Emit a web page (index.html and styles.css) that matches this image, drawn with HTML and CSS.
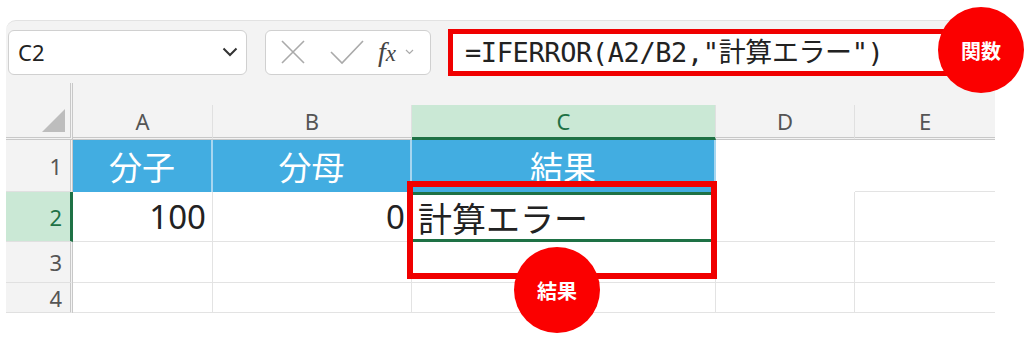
FILE: index.html
```html
<!DOCTYPE html>
<html lang="ja">
<head>
    <meta charset="UTF-8">
    <title>IFERROR 計算エラー</title>
    <link rel="stylesheet" href="styles.css">
</head>
<body>
    <div class="sheet">
        <div class="toolbar">
            <div class="namebox">
                <span>C2</span>
                <svg width="16" height="10" viewBox="0 0 16 10"><path d="M1.5 1.5 L8 8 L14.5 1.5" fill="none" stroke="#333" stroke-width="2"/></svg>
            </div>
            <div class="fxbox">
                <svg width="26" height="26" viewBox="0 0 26 26"><path d="M2 2 L24 24 M24 2 L2 24" stroke="#aaa" stroke-width="1.6" fill="none"/></svg>
                <svg width="34" height="26" viewBox="0 0 34 26"><path d="M1 13 L12 24 L33 2" stroke="#aaa" stroke-width="1.6" fill="none"/></svg>
                <span class="fx"><i>f</i><i class="x">x</i></span>
                <svg width="9" height="6" viewBox="0 0 9 6"><path d="M1 1 L4.5 4.5 L8 1" stroke="#aaa" stroke-width="1.2" fill="none"/></svg>
            </div>
            <div class="formula">=IFERROR(A2/B2,"計算エラー")</div>
        </div>

        <div class="grid">
            <div class="rh spacer"></div>
            <div class="spacer span5"></div>

            <div class="corner"><span class="tri"></span></div>
            <div class="ch">A</div>
            <div class="ch">B</div>
            <div class="ch sel">C</div>
            <div class="ch">D</div>
            <div class="ch last">E</div>

            <div class="rh">1</div>
            <div class="cell head">分子</div>
            <div class="cell head">分母</div>
            <div class="cell head">結果</div>
            <div class="cell open"></div>
            <div class="cell last"></div>

            <div class="rh sel">2</div>
            <div class="cell num">100</div>
            <div class="cell num">0</div>
            <div class="cell text active">計算エラー</div>
            <div class="cell"></div>
            <div class="cell last"></div>

            <div class="rh">3</div>
            <div class="cell"></div>
            <div class="cell"></div>
            <div class="cell"></div>
            <div class="cell"></div>
            <div class="cell last"></div>

            <div class="rh">4</div>
            <div class="cell"></div>
            <div class="cell"></div>
            <div class="cell"></div>
            <div class="cell"></div>
            <div class="cell last"></div>
        </div>
    </div>

    <div class="mark result-box"></div>
    <div class="badge badge-func">関数</div>
    <div class="badge badge-result">結果</div>
</body>
</html>
```

FILE: styles.css
```css
body {
    margin: 0;
    background-color: #ffffff;
    font-family: "Noto Sans", "Noto Sans CJK JP", sans-serif;
    position: relative;
    height: 338px;
    overflow: hidden;
}
.sheet {
    margin: 20px 0 0 6px;
    width: 989px;
    background-color: #f3f3f3;
    border-top-left-radius: 10px;
    border-top: 1px solid #e2e2e2;
}
.toolbar {
    display: flex;
    align-items: center;
    height: 62px;
    padding-left: 2px;
}
.namebox {
    box-sizing: border-box;
    width: 239px;
    height: 45px;
    background-color: #ffffff;
    border: 1px solid #d0d0d0;
    border-radius: 6px;
    display: flex;
    align-items: center;
    justify-content: space-between;
    padding: 0 8px 0 9px;
    font-size: 22px;
    color: #222;
}
.fxbox {
    box-sizing: border-box;
    width: 166px;
    height: 45px;
    margin-left: 18px;
    background-color: #ffffff;
    border: 1px solid #d0d0d0;
    border-radius: 6px;
    display: flex;
    align-items: center;
    padding-left: 14px;
}
.fxbox svg:nth-child(2) {
    margin-left: 24px;
}
.fx {
    font-family: "Liberation Serif", serif;
    font-size: 28px;
    color: #444;
    margin-left: 14px;
    margin-right: 9px;
    line-height: 1;
}
.fx .x {
    font-size: 23px;
}
.formula {
    box-sizing: border-box;
    width: 502px;
    height: 47px;
    margin-left: 17px;
    background-color: #ffffff;
    border: 5px solid #f00000;
    padding-left: 12px;
    font-family: "DejaVu Sans Mono", "Noto Sans CJK JP", monospace;
    font-size: 27px;
    line-height: 37px;
    color: #222;
    white-space: nowrap;
    letter-spacing: -0.4px;
}
.grid {
    display: grid;
    grid-template-columns: 67px 140px 199px 304px 139px 140px;
    grid-template-rows: 22px 35px 52px 50px 41px 30px;
    overflow: hidden;
}
.spacer.span5 {
    grid-column: span 5;
}
.rh {
    border-right: 3px double #c8c8c8;
    box-sizing: border-box;
    padding-right: 8px;
    font-size: 22px;
    color: #555;
    display: flex;
    align-items: center;
    justify-content: flex-end;
    border-bottom: 1px solid #e0e0e0;
}
.rh.spacer {
    border-bottom: none;
}
.rh.sel {
    background-color: #cae8d5;
    color: #1e7145;
    border-right: 3px solid #1e7145;
}
.corner {
    border-right: 3px double #c8c8c8;
    border-bottom: 3px double #c8c8c8;
    position: relative;
}
.tri {
    position: absolute;
    right: 5px;
    bottom: 5px;
    width: 0;
    height: 0;
    border-left: 23px solid transparent;
    border-bottom: 23px solid #bdbdbd;
}
.ch {
    border-bottom: 3px double #c8c8c8;
    border-right: 1px solid #e0e0e0;
    display: flex;
    align-items: center;
    justify-content: center;
    font-size: 22px;
    color: #555;
}
.ch.sel {
    background-color: #cae8d5;
    color: #1e7145;
    border-bottom: 3px solid #1e7145;
}
.ch.last, .cell.last {
    border-right: none;
}
.cell {
    background-color: #ffffff;
    border-right: 1px solid #e3e3e3;
    border-bottom: 1px solid #e3e3e3;
    display: flex;
    align-items: center;
    font-size: 34px;
    color: #222;
    white-space: nowrap;
}
.cell.head {
    background-color: #42ade1;
    color: #ffffff;
    justify-content: center;
    border-right: 2px solid #a6d6f0;
    border-bottom: none;
    font-size: 33px;
}
.cell.open {
    border-right: none;
    border-bottom: none;
}
.cell.num {
    justify-content: flex-end;
    padding-right: 6px;
    font-size: 33px;
}
.cell.text {
    padding-left: 6px;
}
.cell.active {
    box-sizing: border-box;
    border-top: 3px solid #1e7145;
    border-bottom: 3px solid #1e7145;
    border-right: 2px solid #1e7145;
}
.mark {
    position: absolute;
    box-sizing: border-box;
    border: 6px solid #f00000;
}
.result-box {
    left: 407px;
    top: 181px;
    width: 310px;
    height: 98px;
}
.badge {
    position: absolute;
    width: 86px;
    height: 86px;
    border-radius: 50%;
    background-color: #fb0000;
    color: #ffffff;
    font-family: "Noto Sans CJK JP", sans-serif;
    font-weight: bold;
    font-size: 20px;
    display: flex;
    align-items: center;
    justify-content: center;
}
.badge-func {
    left: 938px;
    top: 7px;
}
.badge-result {
    left: 514px;
    top: 247px;
}
```
